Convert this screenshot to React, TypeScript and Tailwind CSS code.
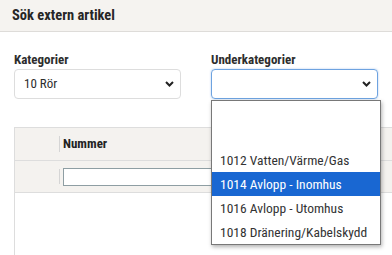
import React from 'react';

const Chevron = () => (
  <svg width="9" height="6" viewBox="0 0 9 6" className="shrink-0">
    <path d="M1 1l3.5 3.5L8 1" fill="none" stroke="#222" strokeWidth="2" />
  </svg>
);

const App = () => {
  const options = ['1012 Vatten/Värme/Gas', '1014 Avlopp - Inomhus', '1016 Avlopp - Utomhus', '1018 Dränering/Kabelskydd'];
  const selected = '1014 Avlopp - Inomhus';

  return (
    <div className="w-[392px] h-[255px] overflow-hidden bg-white text-[#2d2d2d] font-['Roboto_Condensed','Liberation_Sans_Narrow',Roboto,sans-serif]">
      <div className="h-[32px] bg-[#f5f3f0] border-b border-[#dedcd9] px-[12px] flex items-center">
        <span className="text-[14.5px] font-bold text-[#262626] pt-[1px]">Sök extern artikel</span>
      </div>

      <div className="px-[14px] pt-[20px]">
        <div className="flex gap-[30px]">
          <div className="w-[170px]">
            <div className="text-[13px] font-bold leading-[16px] mb-[1px]">Kategorier</div>
            <div className="h-[30px] border border-[#dddddd] rounded-[4px] flex items-center justify-between pl-[9px] pr-[6px] text-[13px]">
              <span>10 Rör</span>
              <Chevron />
            </div>
          </div>
          <div className="w-[170px] relative">
            <div className="text-[13px] font-bold leading-[16px] mb-[1px]">Underkategorier</div>
            <div className="h-[30px] border border-[#6ea3e0] rounded-[4px] flex items-center justify-end pr-[6px] shadow-[0_0_2px_rgba(80,140,220,0.5)]">
              <Chevron />
            </div>
            <div className="absolute left-0 top-[48px] z-10 w-[170px] bg-white border border-[#787878] shadow-[1px_2px_4px_rgba(0,0,0,0.3)] text-[13.5px]">
              <div className="h-[47px]" />
              {options.map((o) => (
                <div
                  key={o}
                  className={
                    o === selected
                      ? 'h-[24px] flex items-center px-[8px] bg-[#1967d2] text-white'
                      : 'h-[24px] flex items-center px-[8px] text-[#333]'
                  }
                >
                  {o}
                </div>
              ))}
            </div>
          </div>
        </div>

        <div className="mt-[28px] w-[420px] border-l border-t border-[#dddddd] h-[140px]">
          <div className="h-[33px] bg-[#f4f2ef] border-b border-[#dddddd] flex items-center">
            <div className="w-[45px] h-[16px] border-r border-[#d5d5d5]" />
            <span className="pl-[3px] text-[13px] font-bold text-[#222]">Nummer</span>
          </div>
          <div className="h-[32px] bg-[#f4f2ef] border-b border-[#dddddd] flex items-center">
            <div className="w-[45px] h-[15px] border-r border-[#d5d5d5]" />
            <div className="ml-[3px] w-[300px] h-[18px] bg-white border border-[#8e9ea3]" />
          </div>
        </div>
      </div>
    </div>
  );
};

export default App;
